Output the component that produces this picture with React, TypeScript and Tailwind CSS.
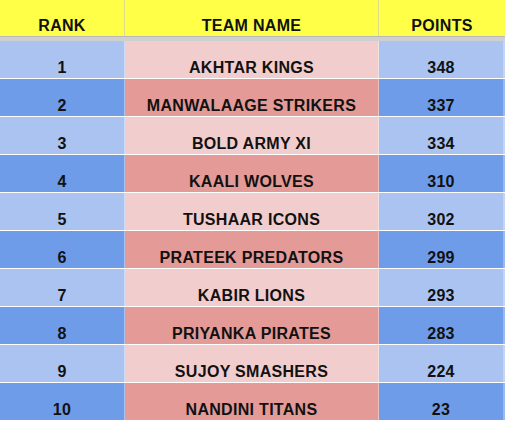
const teams = [
  { rank: 1, name: "AKHTAR KINGS", points: 348 },
  { rank: 2, name: "MANWALAAGE STRIKERS", points: 337 },
  { rank: 3, name: "BOLD ARMY XI", points: 334 },
  { rank: 4, name: "KAALI WOLVES", points: 310 },
  { rank: 5, name: "TUSHAAR ICONS", points: 302 },
  { rank: 6, name: "PRATEEK PREDATORS", points: 299 },
  { rank: 7, name: "KABIR LIONS", points: 293 },
  { rank: 8, name: "PRIYANKA PIRATES", points: 283 },
  { rank: 9, name: "SUJOY SMASHERS", points: 224 },
  { rank: 10, name: "NANDINI TITANS", points: 23 },
];

const cell = "flex items-end justify-center pb-[1px] text-[16px] leading-[18px] font-bold tracking-[0.3px] text-[#111]";

export default function App() {
  return (
    <div className="w-[505px] h-[422px] overflow-hidden bg-white" style={{ fontFamily: '"Liberation Sans", Arial, sans-serif' }}>
      {/* Header */}
      <div className="grid grid-cols-[125px_254px_1fr] h-[36px] bg-[#ffff48]">
        <div className={cn(cell, "border-r border-[#dcdc8c]")}>RANK</div>
        <div className={cn(cell, "border-r border-[#dcdc8c]")}>TEAM NAME</div>
        <div className={cell}>POINTS</div>
      </div>
      <div className="h-[5px] bg-[#cfcfcf] border-t border-[#b9b9b9]" />

      {/* Rows */}
      {teams.map((t, i) => {
        const dark = i % 2 === 1;
        return (
          <div key={t.rank} className="grid grid-cols-[125px_254px_1fr] h-[38px] border-b border-white/40">
            <div className={cn(cell, "border-r border-white/40", dark ? "bg-[#6f9ce8]" : "bg-[#abc3f0]")}>{t.rank}</div>
            <div className={cn(cell, "border-r border-white/40", dark ? "bg-[#e49a97]" : "bg-[#f1cdcd]")}>{t.name}</div>
            <div className={cn(cell, "border-r-2 border-white/30", dark ? "bg-[#6f9ce8]" : "bg-[#abc3f0]")}>{t.points}</div>
          </div>
        );
      })}
    </div>
  );
}

function cn(...c: (string | false | undefined)[]) {
  return c.filter(Boolean).join(" ");
}
